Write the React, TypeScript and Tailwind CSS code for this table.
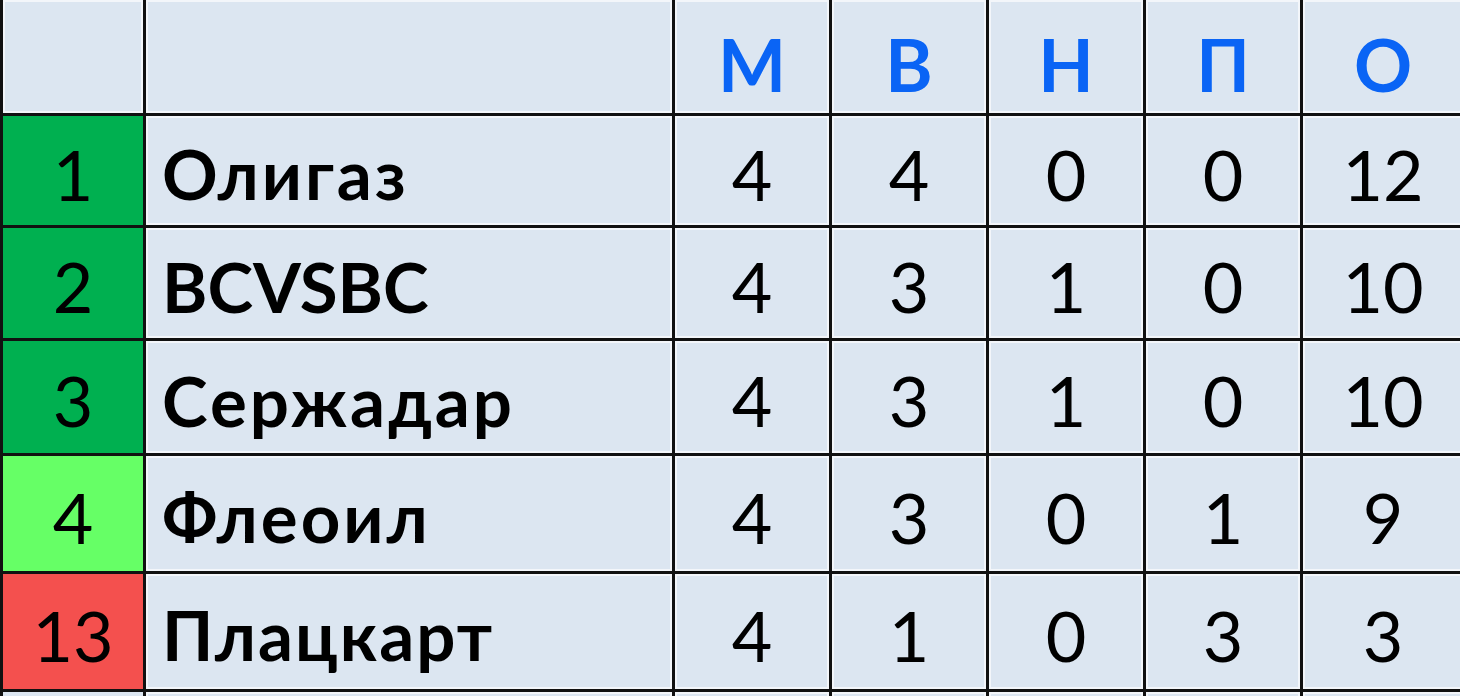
import React from 'react';

type Row = {
    rank: number;
    name: string;
    color: string;
    tracking: string;
    stats: number[];
};

const HEADERS = ['М', 'В', 'Н', 'П', 'О'];

const ROWS: Row[] = [
    { rank: 1, name: 'Олигаз', color: 'bg-[#00b050]', tracking: 'tracking-[3px]', stats: [4, 4, 0, 0, 12] },
    { rank: 2, name: 'BCVSBC', color: 'bg-[#00b050]', tracking: 'tracking-normal', stats: [4, 3, 1, 0, 10] },
    { rank: 3, name: 'Сержадар', color: 'bg-[#00b050]', tracking: 'tracking-[3px]', stats: [4, 3, 1, 0, 10] },
    { rank: 4, name: 'Флеоил', color: 'bg-[#66ff66]', tracking: 'tracking-[3px]', stats: [4, 3, 0, 1, 9] },
    { rank: 13, name: 'Плацкарт', color: 'bg-[#f4504e]', tracking: 'tracking-[2px]', stats: [4, 1, 0, 3, 3] },
];

const ROW_HEIGHTS = ['h-[109px]', 'h-[110px]', 'h-[112px]', 'h-[115px]', 'h-[115px]'];

const cell = 'bg-[#dce6f1] shadow-[inset_0_0_0_2px_#f3f6fa] flex items-center';

export default function App() {
    return (
        <div className="w-[1460px] h-[696px] overflow-hidden bg-[#111] font-['Lato','Liberation_Sans',sans-serif] text-black">
            <div className="grid grid-cols-[140px_526px_154px_154px_154px_154px_160px] gap-[3px] pl-[3px]">
                {/* Header */}
                <div className={`${cell} h-[113px]`} />
                <div className={`${cell} h-[113px]`} />
                {HEADERS.map((h) => (
                    <div key={h} className={`${cell} h-[113px] justify-center pt-[14px] text-[72px] font-bold text-[#0a64f5] leading-none`}>
                        {h}
                    </div>
                ))}

                {ROWS.map((row, i) => (
                    <React.Fragment key={row.rank}>
                        <div className={`${row.color} ${ROW_HEIGHTS[i]} flex items-center justify-center pt-[6px] text-[70px] leading-none`}>
                            {row.rank}
                        </div>
                        <div className={`${cell} ${ROW_HEIGHTS[i]} ${row.tracking} pl-[16px] pt-[6px] text-[69px] font-bold leading-none`}>
                            {row.name}
                        </div>
                        {row.stats.map((s, j) => (
                            <div key={j} className={`${cell} ${ROW_HEIGHTS[i]} justify-center pt-[6px] text-[70px] leading-none`}>
                                {s}
                            </div>
                        ))}
                    </React.Fragment>
                ))}

                {/* Partial next row */}
                <div className="bg-[#dce6f1] h-[20px]" />
                <div className={`${cell} h-[20px]`} />
                {HEADERS.map((h) => (
                    <div key={h} className={`${cell} h-[20px]`} />
                ))}
            </div>
        </div>
    );
}
